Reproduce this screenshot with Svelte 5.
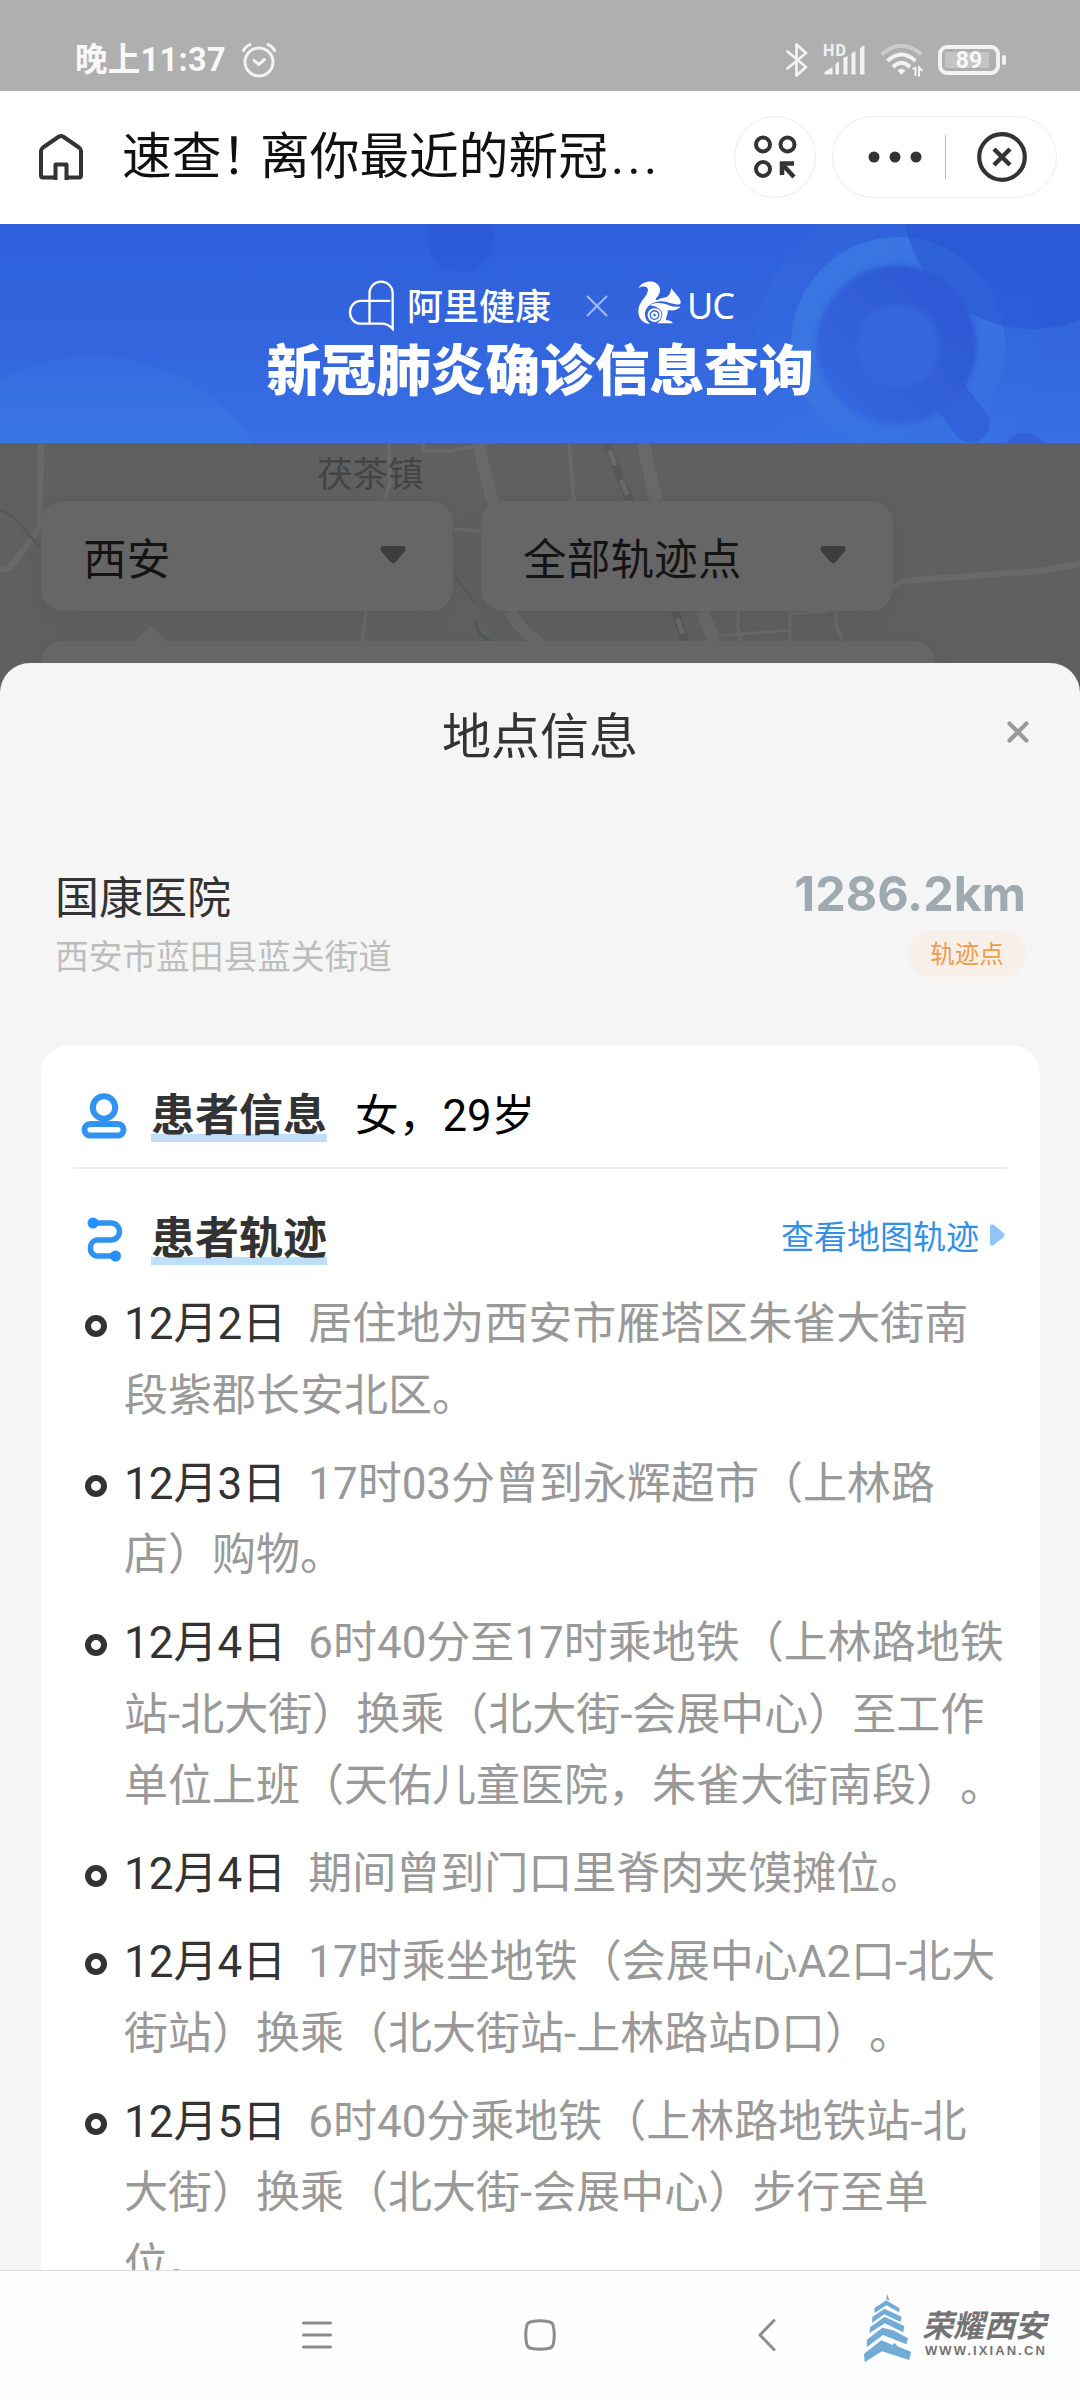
<script>
    const filters = ["西安", "全部轨迹点"];

    const place = {
        name: "国康医院",
        address: "西安市蓝田县蓝关街道",
        distance: "1286.2km",
        tag: "轨迹点",
    };

    const tracks = [
        { date: "12月2日", text: "居住地为西安市雁塔区朱雀大街南段紫郡长安北区。" },
        { date: "12月3日", text: "17时03分曾到永辉超市（上林路店）购物。" },
        {
            date: "12月4日",
            text: "6时40分至17时乘地铁（上林路地铁站-北大街）换乘（北大街-会展中心）至工作单位上班（天佑儿童医院，朱雀大街南段）。",
        },
        { date: "12月4日", text: "期间曾到门口里脊肉夹馍摊位。" },
        { date: "12月4日", text: "17时乘坐地铁（会展中心A2口-北大街站）换乘（北大街站-上林路站D口）。" },
        { date: "12月5日", text: "6时40分乘地铁（上林路地铁站-北大街）换乘（北大街-会展中心）步行至单位。" },
    ];
</script>

<div class="screen">
    <div class="status">
        <span class="time">晚上11:37</span>
        <svg class="alarm" width="36" height="36" viewBox="0 0 36 36" fill="none" stroke="#f2f2f2" stroke-width="3" stroke-linecap="round">
            <circle cx="18" cy="20" r="14" />
            <path d="M2.500 8.500Q4.500 4.500 9 2.500M33.500 8.500Q31.500 4.500 27 2.500M13 18.500L17.800 22.500L23.500 17.500" />
        </svg>
        <div class="signals">
            <svg width="22" height="36" viewBox="0 0 22 36" fill="none" stroke="#f2f2f2" stroke-width="2.800" stroke-linejoin="round" stroke-linecap="round">
                <path d="M1.500 9.500L20 25L10.500 33.500V2.500L20 11L1.500 26.500" />
            </svg>
            <svg class="cell" width="43" height="34" viewBox="0 0 43 34" fill="#f2f2f2">
                <text x="0" y="13" font-size="16" font-weight="700" textLength="23">HD</text>
                <path d="M1.500 31.500V29L9.500 24V31.500ZM12.500 31.500V21L16 18.500V31.500ZM20.500 31.500V15L24.500 13V31.500ZM28.500 31.500V10.500L32.500 8V31.500ZM37 31.500V5L41.500 2V31.500Z" />
            </svg>
            <svg class="wifi" width="44" height="36" viewBox="0 0 44 36" fill="none" stroke="#f2f2f2" stroke-width="4">
                <path d="M1.500 12.500Q21.500 -5 41.500 12.500" stroke="#cbcbcb" />
                <path d="M7.500 19Q21.500 6 35.500 19M13 25Q21.500 16.500 30 25" />
                <path d="M17.500 28.500Q21.500 25 25.500 28.500L21.500 33Z" fill="#f2f2f2" stroke="none" />
                <path d="M32.500 27L35.500 26V34M42.500 29L39 25.500V34.500" stroke-width="2" />
            </svg>
            <div class="battery"><span>89</span></div>
        </div>
    </div>

    <div class="header">
        <svg class="home" width="46" height="48" viewBox="0 0 46 48" fill="none" stroke="#333" stroke-width="4" stroke-linejoin="round">
            <path d="M17.500 47V31.500H28.500V47M17.500 44.500H5Q3 44.500 3 42.500V18Q3 16 5 14.500L21 3.500Q23 2.500 25 3.500L41 14.500Q43 16 43 18V42.500Q43 44.500 41 44.500H28.500" />
        </svg>
        <h1>速查<span class="mark">！</span>离你最近的新冠<span class="dots">...</span></h1>
        <button class="scan" type="button" aria-label="小程序">
            <svg width="44" height="44" viewBox="0 0 44 44" fill="none" stroke="#333" stroke-width="4">
                <circle cx="10" cy="9.500" r="7" />
                <circle cx="34.500" cy="9.500" r="7" />
                <circle cx="10" cy="34" r="7" />
                <path d="M41 42L30 30M29 40V28.500H41" stroke-width="4.500" />
            </svg>
        </button>
        <div class="capsule">
            <svg width="54" height="12" viewBox="0 0 54 12" fill="#333">
                <circle cx="6" cy="6" r="5.500" />
                <circle cx="27" cy="6" r="5.500" />
                <circle cx="48" cy="6" r="5.500" />
            </svg>
            <i class="split"></i>
            <svg width="50" height="50" viewBox="0 0 50 50" fill="none" stroke="#333">
                <circle cx="25" cy="25" r="22.800" stroke-width="4.200" />
                <path d="M17 17L33 33M33 17L17 33" stroke-width="4.500" />
            </svg>
        </div>
    </div>

    <div class="banner">
        <svg class="decor" width="1080" height="219" viewBox="0 0 1080 219">
            <defs>
                <linearGradient id="blob" x1="0" y1="0" x2="0" y2="1">
                    <stop offset="0" stop-color="#3b79e2" stop-opacity="0.200" />
                    <stop offset="0.300" stop-color="#3b79e2" stop-opacity="0.750" />
                </linearGradient>
                <linearGradient id="lens" x1="0.800" y1="0.300" x2="0.200" y2="0.900">
                    <stop offset="0" stop-color="#2e59d5" />
                    <stop offset="1" stop-color="#3366df" />
                </linearGradient>
                <linearGradient id="halo" x1="0" y1="0" x2="1" y2="1">
                    <stop offset="0" stop-color="#3b79e2" />
                    <stop offset="1" stop-color="#386fe1" />
                </linearGradient>
                <filter id="soft" x="-10%" y="-10%" width="120%" height="120%">
                    <feGaussianBlur stdDeviation="2.500" />
                </filter>
            </defs>
            <circle cx="93" cy="322" r="190" fill="url(#blob)" />
            <circle cx="461" cy="14" r="34" fill="#2c58d5" opacity="0.600" />
            <circle cx="898" cy="120" r="142" fill="#3c78e5" opacity="0.120" />
            <circle cx="898" cy="120" r="107" fill="url(#halo)" opacity="0.900" />
            <circle cx="1032" cy="-24" r="129" fill="#2a55d4" opacity="0.600" />
            <path d="M945 165L971 200" stroke="#3162dc" stroke-width="37" stroke-linecap="round" />
            <circle cx="897" cy="121" r="80" fill="url(#lens)" filter="url(#soft)" />
            <circle cx="898" cy="122" r="42" fill="#3566dd" filter="url(#soft)" />
            <circle cx="1025" cy="231" r="22" fill="#3162dc" />
        </svg>
        <div class="brands">
            <svg width="47" height="51" viewBox="24 30 142 152" fill="none" stroke="#fff" stroke-width="7">
                <path d="M89 158V68A35 34 0 0 1 159 68V177Q146 161 125 161H62A32 34.500 0 0 1 62 92H152" />
            </svg>
            <span class="ali">阿里健康</span>
            <svg class="times" width="22" height="22" viewBox="0 0 22 22" stroke="#a3b9f5" stroke-width="2">
                <path d="M1 1L21 21M21 1L1 21" />
            </svg>
            <svg class="squirrel" width="45" height="45" viewBox="890 28 136 136" fill="#fff">
                <path d="M894 52C905 34 930 27 947 37C965 49 962 67 949 82C944 89 947 91 956 86C962 82 970 81 980 79L989 70L994 53C1000 65 1014 74 1020 87C1024 95 1022 101 1016 102C996 102 981 91 961 92C930 94 914 113 914 132C914 145 921 154 930 160C909 161 895 145 894 124C893 91 924 78 923 57C922 46 908 46 894 52Z" />
                <path d="M928 104C950 92 972 98 988 105C1000 110 1011 109 1022 108C1013 119 999 122 983 119C985 134 974 143 979 150C988 150 997 153 998 159H950C967 151 971 130 961 119C952 109 940 105 928 104Z" />
                <path fill-rule="evenodd" d="M943 113A21 21 0 1 0 943.100 113ZM943 119A15 15 0 1 1 942.900 119Z" />
                <path fill-rule="evenodd" d="M943 123A11 11 0 1 0 943.100 123ZM943 130A4 4 0 1 1 942.900 130Z" />
            </svg>
            <span class="uc">UC</span>
        </div>
        <h2>新冠肺炎确诊信息查询</h2>
    </div>

    <div class="map">
        <svg class="roads" width="1080" height="240" viewBox="0 0 1080 240" fill="none" stroke="#696969">
            <path d="M41 0L40 80L39 86L12 122Q8 127 0 126" stroke-width="6" />
            <path d="M0 67Q14 72 24 86L41 106M454 132L475 160" stroke="#555957" stroke-width="2" />
            <path d="M389 0L390 38L385 58M366 168L362 198M423 0V8H450L500 -2M454 86L482 88M569 0L574 58" stroke-width="3.500" />
            <path d="M478 0L490 50L500 80M510 168Q520 188 540 200" stroke-width="12" />
            <path d="M475 177Q477 192 490 198" stroke="#505a55" stroke-width="3" />
            <path d="M606 0L630 58M675 168L685 198" stroke="#585858" stroke-width="8" />
            <path d="M606 0L630 58M675 168L685 198" stroke-width="5" stroke-dasharray="16 16" stroke-dashoffset="-8" />
            <path d="M643 0L656 58M702 168L714 198" stroke-width="13" />
            <path d="M738 168V184L741 198M790 168V198M836 168V182L843 198M720 193L790 187M790 171L830 168" stroke-width="3" />
            <path d="M890 146L903 138L1040 128L1080 121" stroke-width="6" />
        </svg>
        <span class="town">茯茶镇</span>
        <div class="filters">
            {#each filters as filter}
                <div class="filter">
                    <span>{filter}</span>
                    <svg width="26" height="18" viewBox="0 0 26 18" fill="#3e3e3e">
                        <path d="M3 0H23Q27 1 25 5L16 15.500Q13 19 10 15.500L1 5Q-1 1 3 0Z" />
                    </svg>
                </div>
            {/each}
        </div>
        <div class="tip"></div>
    </div>

    <div class="sheet">
        <div class="sheet-head">
            <h3>地点信息</h3>
            <svg class="close" width="22" height="22" viewBox="0 0 22 22" stroke="#999" stroke-width="4.200" stroke-linecap="round">
                <path d="M2.500 2.500L19.500 19.500M19.500 2.500L2.500 19.500" />
            </svg>
        </div>

        <div class="place">
            <div>
                <div class="name">{place.name}</div>
                <div class="address">{place.address}</div>
            </div>
            <div class="side">
                <div class="distance">{place.distance}</div>
                <div class="tag">{place.tag}</div>
            </div>
        </div>

        <div class="card">
            <div class="row patient">
                <svg class="icon" width="46" height="46" viewBox="0 0 46 46" fill="none" stroke="#2f93ef" stroke-width="6">
                    <circle cx="23" cy="14.500" r="11.200" />
                    <rect x="3.500" y="31" width="39" height="11.500" rx="5.700" />
                </svg>
                <h4>患者信息</h4>
                <span class="info">女，29岁</span>
            </div>
            <div class="row track-head">
                <svg class="icon" width="46" height="46" viewBox="0 0 46 46" fill="none" stroke="#2f93ef" stroke-width="5.500">
                    <path d="M12 7H30A8.500 8.500 0 0 1 30 24H15A8.500 8.500 0 0 0 15 40H34" />
                    <circle cx="12" cy="7" r="5.500" fill="#2490fd" stroke="none" />
                    <circle cx="34.500" cy="40" r="5.500" fill="#2490fd" stroke="none" />
                </svg>
                <h4>患者轨迹</h4>
                <span class="link">查看地图轨迹</span>
                <svg class="go" width="15" height="22" viewBox="0 0 15 22" fill="#90c5fc">
                    <path d="M0 2Q1 -1 4 1L13 8.500Q16 11 13 13.500L4 21Q1 23 0 20Z" />
                </svg>
            </div>
            <ul>
                {#each tracks as track}
                    <li><span class="date">{track.date}</span>{track.text}</li>
                {/each}
            </ul>
        </div>
    </div>

    <div class="nav">
        <svg width="32" height="32" viewBox="0 0 32 32" stroke="#8c8c8c" stroke-width="3" stroke-linecap="round">
            <path d="M2.500 4H29.500M2.500 16H29.500M2.500 28H29.500" />
        </svg>
        <svg width="32" height="32" viewBox="0 0 32 32" fill="none" stroke="#8c8c8c" stroke-width="3">
            <path d="M8 2.500Q16 1 24 2.500Q29 3 29.500 8Q31 16 29.500 24Q29 29 24 29.500Q16 31 8 29.500Q3 29 2.500 24Q1 16 2.500 8Q3 3 8 2.500Z" />
        </svg>
        <svg width="18" height="34" viewBox="0 0 18 34" fill="none" stroke="#8c8c8c" stroke-width="3" stroke-linecap="round" stroke-linejoin="round">
            <path d="M16 2.500L2 17L16 31.500" />
        </svg>
        <div class="watermark">
            <svg width="47" height="70" viewBox="0 0 141 210" fill="#72abd6">
                <path d="M67 20L69 2L76 21Z" />
                <path d="M31 45L67 22L107 46L105 58L67 37L32 60Z" />
                <path d="M25 72L61 47L113 71L110 86L90 78L61 64L24 90Z" />
                <path d="M18 103L62 71L121 99L118 118L62 91L16 121Z" />
                <path d="M9 140L55 104L88 112L132 136L127 154L57 126L8 163Z" />
                <path d="M0 182L52 142L86 156L92 149L100 160L141 176L136 201L54 175L2 208Z" />
            </svg>
            <div class="words">
                <span class="brush">荣耀西安</span>
                <span class="site">WWW.IXIAN.CN</span>
            </div>
        </div>
    </div>
</div>

<style>
    .screen {
        width: 1080px;
        height: 2400px;
        display: flex;
        flex-direction: column;
        overflow: hidden;
        background: #fff;
        color: #333;
        font-family: Roboto, "Noto Sans CJK SC", sans-serif;
        text-spacing-trim: space-all;
    }

    h1, h2, h3, h4, ul {
        margin: 0;
        padding: 0;
        font-weight: 400;
    }

    svg {
        display: block;
        flex: none;
    }

    .status {
        flex: none;
        height: 91px;
        box-sizing: border-box;
        padding: 28px 74px 0 75px;
        display: flex;
        align-items: center;
        background: #afafaf;
        color: #f8f8f8;
    }

    .time {
        width: 166px;
        font-size: 32.500px;
        line-height: 40px;
        font-weight: 700;
        white-space: nowrap;
        letter-spacing: 0.3px;
    }

    .signals {
        margin-left: auto;
        display: flex;
        align-items: center;
    }

    .cell {
        margin-left: 15px;
        overflow: visible;
    }

    .wifi {
        margin: 0 14px 0 14px;
    }

    .battery {
        position: relative;
        width: 62px;
        height: 30px;
        box-sizing: border-box;
        border: 4px solid #f2f2f2;
        border-radius: 9px;
        padding: 3px;
        margin-right: 6px;
    }

    .battery span {
        display: block;
        width: 44px;
        height: 16px;
        line-height: 17px;
        background: #c4c4c4;
        font-size: 23px;
        font-weight: 700;
        text-align: center;
        text-indent: 4px;
    }

    .battery::after {
        content: "";
        position: absolute;
        right: -10px;
        top: 6px;
        width: 4px;
        height: 10px;
        border-radius: 2px;
        background: #f2f2f2;
    }

    .header {
        flex: none;
        height: 133px;
        box-sizing: border-box;
        padding: 0 23px 1px 38px;
        display: flex;
        align-items: center;
        background: #fff;
    }

    h1 {
        flex: none;
        width: 574px;
        margin-left: 38px;
        font-size: 49.700px;
        line-height: 70px;
        color: #111;
        white-space: nowrap;
    }

    .mark {
        margin-right: -11px;
    }

    .dots {
        margin-left: 3px;
        letter-spacing: 3.5px;
    }

    .scan,
    .capsule {
        height: 82px;
        box-sizing: border-box;
        border: 1px solid #ececec;
        border-radius: 41px;
        background: #fff;
        display: flex;
        align-items: center;
        justify-content: center;
    }

    .scan {
        flex: none;
        width: 82px;
        margin-left: 38px;
        padding: 0;
    }

    .capsule {
        width: 225px;
        margin-left: auto;
        padding-left: 5px;
    }

    .split {
        width: 1px;
        height: 44px;
        margin: 0 31px 0 23px;
        background: #bbb;
    }

    .banner {
        position: relative;
        flex: none;
        height: 219px;
        background: linear-gradient(176deg, #3060dc 10%, #3366de 55%, #386fe5);
        background: linear-gradient(#3060dc 10%, #3366de 55%, #386fe5);
        color: #fff;
    }

    .decor,
    .roads {
        position: absolute;
        left: 0;
        top: 0;
    }

    .brands {
        position: relative;
        height: 51px;
        padding: 56px 0 0 348px;
        display: flex;
        align-items: center;
    }

    .ali {
        width: 179px;
        margin: -3px 0 0 12px;
        font-size: 36px;
        font-weight: 500;
    }

    .squirrel {
        margin: -6px 5px 0 29px;
    }

    .uc {
        font: 400 36px/40px "Noto Sans", sans-serif;
        letter-spacing: -1px;
    }

    h2 {
        position: relative;
        font-size: 55px;
        line-height: 81px;
        font-weight: 900;
        text-align: center;
        letter-spacing: -0.3px;
    }

    .map {
        position: relative;
        flex: none;
        height: 260px;
        margin-bottom: -40px;
        background: #606060;
        overflow: hidden;
    }

    .town {
        position: relative;
        display: block;
        height: 58px;
        line-height: 65px;
        padding-left: 317px;
        font-size: 35.500px;
        color: #444;
    }

    .filters {
        position: relative;
        display: flex;
        gap: 28px;
        padding-left: 41px;
    }

    .filter {
        width: 412px;
        height: 110px;
        box-sizing: border-box;
        padding: 0 47px 0 42px;
        border-radius: 22px;
        display: flex;
        align-items: center;
        justify-content: space-between;
        background: #666;
        box-shadow: 0 6px 24px rgba(0, 0, 0, 0.08);
        font-size: 43.700px;
        color: #141414;
    }

    .filter svg {
        margin-top: -3px;
    }

    .tip {
        position: relative;
        width: 894px;
        height: 80px;
        margin: 30px 0 0 41px;
        border-radius: 22px;
        background: #666;
        box-shadow: 0 6px 24px rgba(0, 0, 0, 0.08);
    }

    .tip::before {
        content: "";
        position: absolute;
        left: 93px;
        top: -15px;
        border: 17px solid transparent;
        border-top: 0;
        border-bottom: 16px solid #666;
    }

    .sheet {
        position: relative;
        flex: none;
        height: 1607px;
        display: flex;
        flex-direction: column;
        border-radius: 30px 30px 0 0;
        overflow: hidden;
        background: #f5f5f5;
    }

    .sheet-head {
        position: relative;
        flex: none;
        height: 150px;
        line-height: 149px;
        text-align: center;
    }

    h3 {
        font-size: 49px;
    }

    .close {
        position: absolute;
        right: 51px;
        top: 58px;
    }

    .place {
        flex: none;
        height: 232px;
        box-sizing: border-box;
        padding: 52px 54px 0 55px;
        display: flex;
        justify-content: space-between;
    }

    .name {
        font-size: 44px;
        line-height: 68px;
    }

    .address {
        font-size: 33.700px;
        line-height: 50px;
        color: #bdbdbd;
    }

    .side {
        display: flex;
        flex-direction: column;
        align-items: flex-end;
    }

    .distance {
        font: 700 48.400px/58px Inter, sans-serif;
        color: #9fa9b0;
    }

    .tag {
        margin-top: 7px;
        width: 118px;
        height: 47px;
        border-radius: 24px;
        background: #f8efe8;
        color: #ec9d4b;
        font-size: 24.500px;
        line-height: 50px;
        text-align: center;
    }

    .card {
        flex: none;
        width: 999px;
        min-height: 1300px;
        box-sizing: border-box;
        margin-left: 41px;
        padding: 0 33px;
        border-radius: 28px;
        background: #fff;
    }

    .row {
        display: flex;
        align-items: center;
        padding-left: 7px;
    }

    .patient {
        height: 124px;
        padding-top: 20px;
        box-sizing: border-box;
        border-bottom: 2px solid #ececec;
    }

    .patient .info {
        margin-top: -9px;
        padding-left: 28px;
        font-size: 43.700px;
        color: #000;
    }

    .track-head {
        height: 112px;
        padding-top: 28px;
        box-sizing: border-box;
    }

    h4 {
        margin-left: 24px;
        font-size: 44px;
        line-height: 51px;
        font-weight: 700;
        background: linear-gradient(#bfdff9, #bfdff9) no-repeat 0 100% / 100% 8px;
    }

    .link {
        margin: -8px 0 0 auto;
        font-size: 33px;
        color: #3390e6;
    }

    .go {
        margin: -9px 2px 0 11px;
    }

    ul {
        padding: 8px 0 0 50px;
        list-style: none;
    }

    li {
        position: relative;
        margin-bottom: 16.500px;
        font-size: 44px;
        line-height: 71.500px;
        color: #999;
    }

    li::before {
        content: "";
        position: absolute;
        left: -39px;
        top: 26px;
        width: 10px;
        height: 10px;
        border: 6px solid #333;
        border-radius: 50%;
    }

    .date {
        margin-right: 22px;
        color: #333;
    }

    .nav {
        position: relative;
        flex: 1;
        display: flex;
        align-items: center;
        gap: 191px;
        padding: 0 0 2px 301px;
        border-top: 1px solid #ddd;
        background: #fefefe;
    }

    .nav > svg:nth-child(3) {
        margin-left: 11px;
    }

    .watermark {
        position: absolute;
        left: 864px;
        top: 22px;
        display: flex;
        gap: 11px;
        color: #737373;
    }

    .words {
        display: flex;
        flex-direction: column;
        padding-top: 12px;
    }

    .brush {
        font: italic 700 31px/38px "Noto Sans CJK SC", sans-serif;
        white-space: nowrap;
    }

    .site {
        padding-left: 3px;
        font: 700 13px/16px "Liberation Sans", sans-serif;
        letter-spacing: 2.1px;
    }
</style>
